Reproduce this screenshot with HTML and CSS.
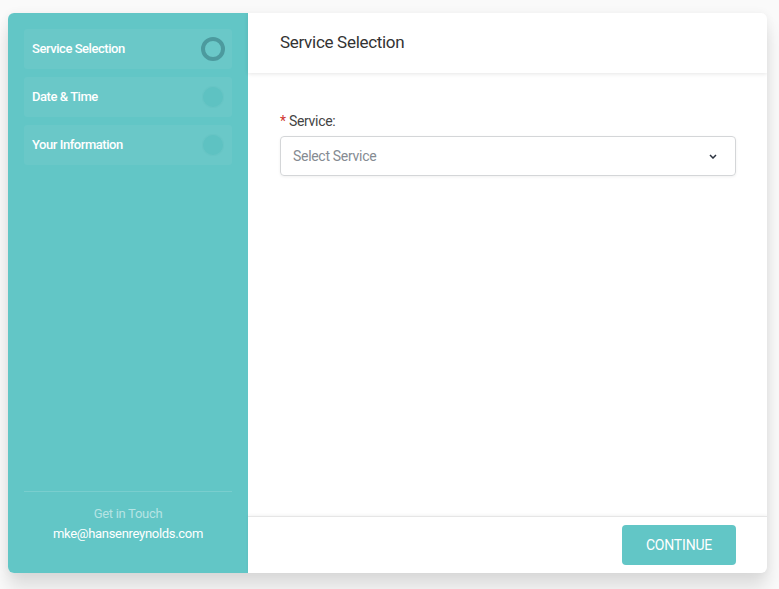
FILE: index.html
```html
<!DOCTYPE html>
<html lang="en">
<head>
  <meta charset="UTF-8"/>
  <meta name="viewport" content="width=device-width, initial-scale=1.0"/>
  <title>Booking</title>
  <link rel="stylesheet" href="styles.css">
</head>
<body>

  <div class="booking">
    <!-- Steps -->
    <aside class="sidebar">
      <ul class="steps">
        <li class="step active">Service Selection <span class="dot"></span></li>
        <li class="step">Date &amp; Time <span class="dot"></span></li>
        <li class="step">Your Information <span class="dot"></span></li>
      </ul>

      <div class="contact">
        <div class="contact-title">Get in Touch</div>
        <div class="contact-mail">mke@hansenreynolds.com</div>
      </div>
    </aside>

    <!-- Form -->
    <main class="panel">
      <div class="panel-head">Service Selection</div>

      <div class="panel-body">
        <label class="field-label"><span class="req">*</span> Service:</label>
        <div class="select">
          <span>Select Service</span>
          <svg width="8" height="5" viewBox="0 0 8 5"><path d="M1 1l3 3 3-3" fill="none" stroke="#2c3340" stroke-width="1.5"/></svg>
        </div>
      </div>

      <div class="panel-foot">
        <button class="btn">Continue</button>
      </div>
    </main>
  </div>

</body>
</html>
```

FILE: styles.css
```css
body {
  margin: 0;
  padding: 13px 12px 16px 8px;
  background: #fafafa;
  font-family: Roboto, 'Liberation Sans', sans-serif;
}

.booking {
  display: flex;
  height: 560px;
  width: 759px;
  border-radius: 6px;
  overflow: hidden;
  background: white;
  box-shadow: 0 14px 18px rgba(0,0,0,0.12), 0 0 10px rgba(0,0,0,0.05);
}

/* Sidebar */
.sidebar {
  width: 240px;
  background: #62c6c6;
  padding: 16px 16px 0;
  box-sizing: border-box;
  display: flex;
  flex-direction: column;
}

.steps {
  list-style: none;
  margin: 0;
  padding: 0;
  display: flex;
  flex-direction: column;
  gap: 8px;
}

.step {
  height: 40px;
  display: flex;
  align-items: center;
  justify-content: space-between;
  padding: 0 8px 1px;
  box-sizing: border-box;
  background: rgba(255,255,255,0.05);
  border-radius: 3px;
  color: white;
  font-size: 13px;
  font-weight: 500;
  letter-spacing: -0.45px;
}

.dot {
  width: 22px;
  height: 22px;
  border-radius: 50%;
  background: #5ec2c2;
  border: 1px solid rgba(255,255,255,0.06);
  box-sizing: border-box;
}

.step.active .dot {
  width: 24px;
  height: 24px;
  margin-right: -1px;
  background: transparent;
  border: 4px solid #4c9a9e;
}

.contact {
  margin-top: auto;
  border-top: 1px solid rgba(255,255,255,0.15);
  padding: 14px 0 32px;
  text-align: center;
  font-size: 13px;
  letter-spacing: -0.3px;
}

.contact-title {
  color: rgba(255,255,255,0.55);
  margin-bottom: 5px;
}

.contact-mail {
  color: white;
}

/* Panel */
.panel {
  flex: 1;
  display: flex;
  flex-direction: column;
}

.panel-head {
  height: 60px;
  display: flex;
  align-items: center;
  padding: 0 32px 2px;
  box-sizing: border-box;
  font-size: 17px;
  color: #333;
  letter-spacing: -0.3px;
  box-shadow: 0 1px 4px rgba(0,0,0,0.1);
}

.panel-body {
  flex: 1;
  padding: 40px 31px 0 32px;
}

.field-label {
  display: block;
  font-size: 14px;
  color: #444;
  margin-bottom: 7px;
  letter-spacing: -0.3px;
}

.req {
  color: #d0352f;
}

.select {
  height: 40px;
  border: 1px solid #d4d6d8;
  border-radius: 4px;
  box-sizing: border-box;
  display: flex;
  align-items: center;
  justify-content: space-between;
  padding: 0 18px 0 12px;
  font-size: 14px;
  color: #858b92;
  letter-spacing: -0.3px;
  box-shadow: 0 1px 3px rgba(0,0,0,0.06);
}

.panel-foot {
  height: 57px;
  border-top: 1px solid #e6e6e6;
  box-shadow: 0 -1px 3px rgba(0,0,0,0.05);
  display: flex;
  align-items: center;
  justify-content: flex-end;
  padding: 0 31px 0 0;
  box-sizing: border-box;
}

.btn {
  width: 114px;
  height: 40px;
  border: none;
  border-radius: 4px;
  background: #62c6c6;
  color: white;
  font-family: Roboto, sans-serif;
  font-size: 14px;
  text-transform: uppercase;
  letter-spacing: -0.2px;
}
```
